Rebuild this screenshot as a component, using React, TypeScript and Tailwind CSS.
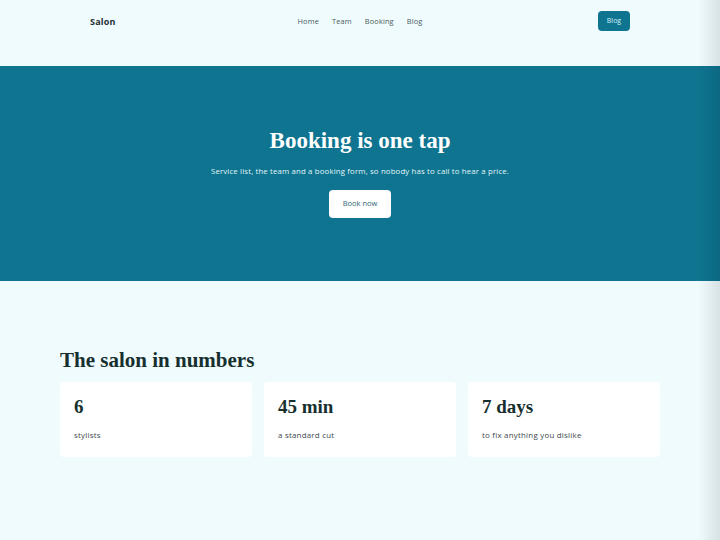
export default function App() {
  const stats = [
    { value: '6', label: 'stylists' },
    { value: '45 min', label: 'a standard cut' },
    { value: '7 days', label: 'to fix anything you dislike' },
  ];

  return (
    <div className="relative min-h-[540px] bg-[#effbfd] font-['Open_Sans',sans-serif] text-[#1b3236]">
      {/* Header */}
      <header className="mx-auto grid h-[66px] w-[540px] grid-cols-3 items-start pt-[11px]">
        <span className="mt-[4px] text-[9px] font-bold tracking-wide text-[#1f2f33]">Salon</span>
        <nav className="mt-[5px] flex justify-center gap-[13px] text-[7.4px] tracking-[0.02em] text-[#4b5c61]">
          <a>Home</a>
          <a>Team</a>
          <a>Booking</a>
          <a>Blog</a>
        </nav>
        <div className="flex justify-end">
          <a className="flex h-[20px] w-[32px] items-center justify-center rounded-[4px] bg-[#0e7490] text-[7px] text-[#d5f3fa]">
            Blog
          </a>
        </div>
      </header>

      {/* Hero */}
      <section className="flex h-[215px] flex-col items-center justify-center bg-[#0e7490] text-white">
        <h1 className="font-['Liberation_Serif',serif] text-[23px] font-bold leading-none">
          Booking is one tap
        </h1>
        <p className="mt-[14px] text-[7.8px] tracking-[0.02em] text-[#e3f6fa]">
          Service list, the team and a booking form, so nobody has to call to hear a price.
        </p>
        <a className="mt-[12px] flex h-[28px] w-[62px] items-center justify-center rounded-[4px] bg-white text-[7.5px] text-[#2d6474]">
          Book now
        </a>
      </section>

      {/* Stats */}
      <section className="mx-auto w-[600px] pt-[69px]">
        <h2 className="font-['Liberation_Serif',serif] text-[21px] font-bold leading-none text-[#17302f]">
          The salon in numbers
        </h2>
        <div className="mt-[11px] grid grid-cols-3 gap-[12px]">
          {stats.map((s) => (
            <div key={s.label} className="h-[75px] rounded-[4px] bg-white px-[14px] pt-[15px]">
              <div className="font-['Liberation_Serif',serif] text-[19px] font-bold leading-none text-[#17302f]">
                {s.value}
              </div>
              <div className="mt-[14px] text-[7.9px] tracking-[0.03em] text-[#3c4a4d]">{s.label}</div>
            </div>
          ))}
        </div>
      </section>

      {/* edge shade */}
      <div className="pointer-events-none absolute inset-y-0 right-0 w-[22px] bg-gradient-to-r from-transparent to-black/10" />
    </div>
  );
}
